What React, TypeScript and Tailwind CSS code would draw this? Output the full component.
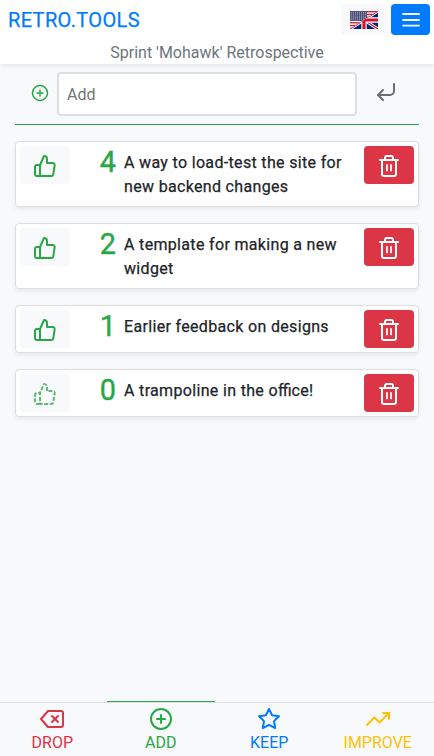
import React from 'react';
import {
  FiThumbsUp, FiPlusCircle, FiDelete, FiStar, FiTrendingUp, FiCornerDownLeft,
} from 'react-icons/fi';

const items = [
  { votes: 4, text: 'A way to load-test the site for new backend changes', voted: true },
  { votes: 2, text: 'A template for making a new widget', voted: true },
  { votes: 1, text: 'Earlier feedback on designs', voted: true },
  { votes: 0, text: <>A trampoline in the o<span className="tracking-normal">ffi</span>ce!</>, voted: false },
];

const tabs = [
  { label: 'DROP', Icon: FiDelete, color: 'text-[#dc3545]', active: false },
  { label: 'ADD', Icon: FiPlusCircle, color: 'text-[#28a745]', active: true },
  { label: 'KEEP', Icon: FiStar, color: 'text-[#007bff]', active: false },
  { label: 'IMPROVE', Icon: FiTrendingUp, color: 'text-[#ffc107]', active: false },
];

function Trash() {
  return (
    <svg width="24" height="24" viewBox="0 0 24 24" fill="none" stroke="currentColor" strokeWidth="2" strokeLinejoin="round">
      <path d="M2.2 6H21.8" />
      <path d="M19 6v14a2 2 0 0 1-2 2H7a2 2 0 0 1-2-2V6" />
      <path d="M8 6V4a2 2 0 0 1 2-2h4a2 2 0 0 1 2 2v2" />
      <path d="M10 10.3v7M14 10.3v7" strokeWidth="1.8" />
    </svg>
  );
}

function Flag() {
  return (
    <svg width="28" height="18" viewBox="0 0 28 18">
      <defs>
        <clipPath id="us"><path d="M0 0H28L0 18Z" /></clipPath>
        <clipPath id="uk"><path d="M28 0V18H0Z" /></clipPath>
      </defs>
      <g clipPath="url(#us)">
        <rect width="28" height="18" fill="#fff" />
        {[0, 1, 2, 3, 4, 5, 6].map((i) => (
          <rect key={i} y={i * 2.77} width="28" height="1.385" fill="#c8203f" />
        ))}
        <rect width="17" height="10" fill="#4a4978" />
        {[0, 1, 2, 3, 4].map((r) =>
          [0, 1, 2, 3, 4, 5, 6, 7].map((c) => (
            <circle key={`${r}-${c}`} cx={1.2 + c * 2.05} cy={1.2 + r * 1.9} r="0.55" fill="#c5c5d8" />
          )),
        )}
      </g>
      <g clipPath="url(#uk)">
        <rect width="28" height="18" fill="#00247d" />
        <path d="M0 0L28 18M28 0L0 18" stroke="#fff" strokeWidth="3" />
        <path d="M14 9L28 18M28 0L0 18" stroke="#cf142b" strokeWidth="1.2" />
        <path d="M14 0V18M0 9H28" stroke="#fff" strokeWidth="5.4" />
        <path d="M14 0V18M0 9H28" stroke="#cf142b" strokeWidth="3.2" />
      </g>
    </svg>
  );
}

export default function App() {
  return (
    <div className="flex h-[756px] w-[434px] flex-col overflow-hidden bg-[#f8f9fb] font-[Roboto,sans-serif] text-base text-[#212529]">
      <header className="z-10 h-16 shrink-0 bg-white shadow-[0_2px_4px_rgba(0,0,0,0.075)]">
        <div className="flex h-10 items-center pr-1 pl-2">
          <h1 className="flex-1 text-xl font-normal tracking-[0.36px] text-[#007bff] [-webkit-text-stroke:0.25px_#007bff]">
            RETRO.TOOLS
          </h1>
          <button className="mr-1 mt-[-1px] flex h-[31px] w-[46px] items-center justify-center rounded bg-[#f8f9fa]">
            <Flag />
          </button>
          <button className="mt-[-1px] flex h-[31px] w-[39px] items-center justify-center rounded bg-[#007bff]">
            <svg width="24" height="24" viewBox="0 0 24 24" stroke="#fff" strokeWidth="1.8">
              <path d="M3.4 6H20.6M3.4 12H20.6M3.4 17.7H20.6" />
            </svg>
          </button>
        </div>
        <p className="pt-px text-center leading-6 text-[#6c757d]">Sprint 'Mohawk' Retrospective</p>
      </header>

      <div className="mx-[15px] flex h-[61px] shrink-0 items-start border-b border-[#28a745] pt-2">
        <div className="flex h-[42px] w-[42px] items-center justify-end pr-2 text-[#28a745]">
          <FiPlusCircle size={18} />
        </div>
        <input
          placeholder="Add"
          className="h-11 w-[300px] rounded border-2 border-[#dedfe0] bg-white px-2 placeholder:text-[#757575]"
        />
        <div className="ml-[17px] flex h-10 items-center text-[#6c6d6f]">
          <FiCornerDownLeft size={24} />
        </div>
      </div>

      <main className="flex flex-1 flex-col gap-4 px-[15px] pt-4">
        {items.map((item) => (
          <article
            key={item.votes}
            className="flex items-start rounded border border-[#dfdfdf] bg-white px-1 shadow-[0_2px_4px_rgba(0,0,0,0.075)]"
          >
            <button className="my-1 flex h-[38px] w-[50px] items-center justify-center rounded bg-[#f8f9fa] pt-[2px] text-[#28a745]">
              {item.voted ? (
                <FiThumbsUp size={24} />
              ) : (
                <FiThumbsUp size={24} strokeLinecap="butt" strokeDasharray="4 1.6" className="opacity-75" />
              )}
            </button>
            <span className="mt-1 w-[46px] text-right text-[28.8px] leading-8 font-normal text-[#28a745] [-webkit-text-stroke:0.4px_#28a745]">
              {item.votes}
            </span>
            <p className="ml-2 w-[240px] pt-[9px] pr-4 pb-[7px] leading-6 font-normal tracking-[0.33px] [-webkit-text-stroke:0.25px_#212529]">
              {item.text}
            </p>
            <button className="my-1 flex h-[38px] w-[50px] items-center justify-center rounded bg-[#dc3545] pt-[2px] text-white">
              <Trash />
            </button>
          </article>
        ))}
      </main>

      <footer className="h-[54px] shrink-0 border-t border-[#dee2e6]">
        <nav className="-ml-[2px] grid w-[434px] grid-cols-4">
          {tabs.map(({ label, Icon, color, active }) => (
            <div key={label} className={`relative flex flex-col items-center pt-1 ${color}`}>
              {active && <div className="absolute top-[-2px] left-0 h-px w-full bg-[#28a745]" />}
              <Icon size={24} />
              <span className="leading-6">{label}</span>
            </div>
          ))}
        </nav>
      </footer>
    </div>
  );
}
